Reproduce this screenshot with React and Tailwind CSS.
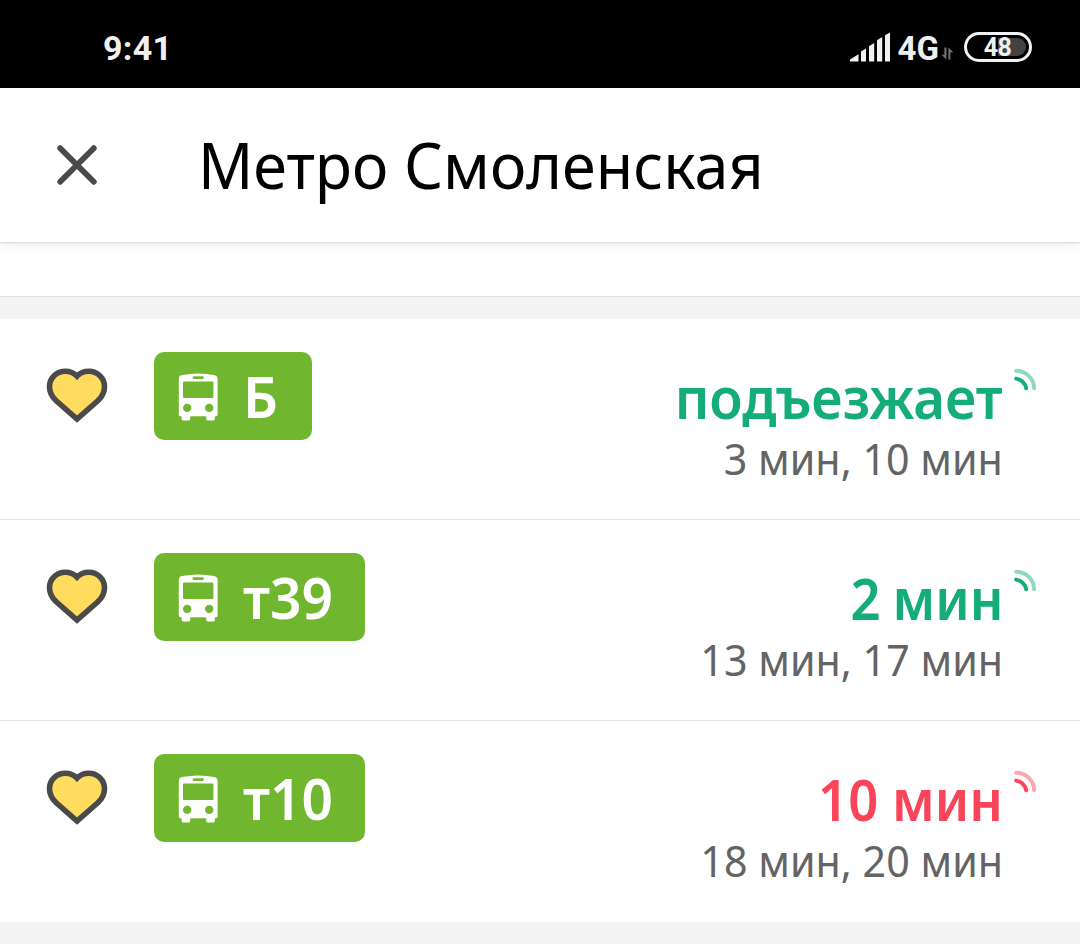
const ROWS = [
  { route: "Б", badge: "w-[158px]", first: "подъезжает", fit: "scale-x-[.96]", next: "3 мин, 10 мин", tone: "text-[#14ad78]" },
  { route: "т39", badge: "w-[211px]", first: "2 мин", fit: "scale-x-[.925] [word-spacing:-2px]", next: "13 мин, 17 мин", tone: "text-[#14ad78]" },
  { route: "т10", badge: "w-[211px]", first: "10 мин", fit: "scale-x-[.925]", next: "18 мин, 20 мин", tone: "text-[#fa4459]" },
];

function Signal() {
  return (
    <svg className="-mt-[1px] h-[30px] w-[42px]" viewBox="0 0 42 30" fill="#f2f2f2">
      <path d="M0 29.5V27.5L8.5 22.3V29.5Z" />
      <path d="M11 29.5V19.5L16 16.6V29.5Z" />
      <path d="M19 29.5V14.2L24.2 11V29.5Z" />
      <path d="M27 29.5V8.3L32.2 5V29.5Z" />
      <path d="M35 29.5V3.2L40 .5V29.5Z" />
    </svg>
  );
}

function DataArrows() {
  return (
    <svg className="h-[13px] w-[13px]" viewBox="0 0 13 13" fill="#747474">
      <path d="M3.4 .5H5.4V12.5L.5 7.8H3.4Z" />
      <path d="M9.4 12.5H7.4V.5L12.3 5.2H9.4Z" />
    </svg>
  );
}

function Heart() {
  return (
    <svg className="h-[56px] w-[62px]" viewBox="0 0 62 56">
      <path
        d="M31 8.2C27.5 4.5 23.5 3.3 19.3 3.3C10.5 3.3 3.5 10 3.5 18.7C3.5 24.5 6 28.8 10.2 32.8L31 51L51.8 32.8C56 28.8 58.5 24.5 58.5 18.7C58.5 10 51.5 3.3 42.7 3.3C38.5 3.3 34.5 4.5 31 8.2Z"
        fill="#ffdb5e"
        stroke="#4a4a4a"
        strokeWidth="5.6"
      />
    </svg>
  );
}

function Bus() {
  return (
    <svg className="mt-[2px] h-[48px] w-[40px]" viewBox="0 0 40 48">
      <path
        fillRule="evenodd"
        fill="#fff"
        d="M4 2Q20 -1 36 2Q39.6 2.6 39.6 6V41.5Q39.6 43.2 38 43.2H36.8V46Q36.8 47.4 35.4 47.4H29.6Q28.2 47.4 28.2 46V43.2H12.2V46Q12.2 47.4 10.8 47.4H5Q3.6 47.4 3.6 46V43.2H2.4Q.8 43.2 .8 41.5V6Q.8 2.6 4 2ZM15.8 3.3A1.3 1.3 0 0 0 15.8 5.9H24.6A1.3 1.3 0 0 0 24.6 3.3ZM6 8.6Q5 8.6 5 9.6V24Q5 25 6 25H34.4Q35.4 25 35.4 24V9.6Q35.4 8.6 34.4 8.6ZM9.2 30.7A4.2 4.2 0 1 0 9.2 39.1A4.2 4.2 0 1 0 9.2 30.7ZM31.2 30.7A4.2 4.2 0 1 0 31.2 39.1A4.2 4.2 0 1 0 31.2 30.7Z"
      />
    </svg>
  );
}

function Live() {
  return (
    <svg className="mt-[49px] ml-[10px] h-[24px] w-[24px]" viewBox="0 0 24 24" fill="none" stroke="currentColor" strokeWidth="4" strokeLinecap="round">
      <path d="M3.2 10.6Q11.2 12 13.2 20.2" />
      <path d="M3.2 2.8C13 2.8 21 10.7 21.1 20.2" opacity=".48" />
    </svg>
  );
}

function Row({ row }) {
  return (
    <li className="flex h-[201px] items-start border-b border-[#e3e3e3] last:border-b-0">
      <button className="mt-[49px] ml-[46px] block">
        <Heart />
      </button>
      <div className={`mt-[33px] ml-[46px] flex h-[88px] items-center rounded-[10px] bg-[#70b72f] pl-[24px] text-white ${row.badge}`}>
        <Bus />
        <span className="ml-[25px] origin-left scale-x-[.967] text-[57px] leading-[86px] font-semibold">{row.route}</span>
      </div>
      <div className="ml-auto flex flex-col items-end pt-[39px] whitespace-nowrap">
        <span className={`origin-right text-[57px] leading-[78px] font-semibold ${row.tone} ${row.fit}`}>{row.first}</span>
        <span className="-mt-[6px] origin-right scale-x-[.937] text-[44px] leading-[56px] text-[#646464]">{row.next}</span>
      </div>
      <div className={`w-[77px] ${row.tone}`}>
        <Live />
      </div>
    </li>
  );
}

export default function App() {
  return (
    <main className="flex h-[946px] w-[1080px] flex-col overflow-hidden bg-white font-['Noto_Sans',sans-serif]">
      <div className="flex h-[88px] shrink-0 items-center bg-black pt-[6px] pr-[48px] pl-[103px] font-['Roboto',sans-serif] font-bold text-[#f0f0f0]">
        <span className="mt-[2px] text-[34px] leading-[40px] tracking-[0.3px]">9:41</span>
        <div className="ml-auto flex items-center">
          <Signal />
          <span className="mt-[3px] ml-[6px] text-[33px] leading-[40px]">4G</span>
          <div className="ml-[2px] pt-[13px]">
            <DataArrows />
          </div>
          <div className="ml-[10px] flex h-[30px] w-[68px] rounded-full border-[3px] border-[#f2f2f2] p-[3px]">
            <div className="h-full w-full rounded-full bg-[linear-gradient(to_right,#000_50%,#424242_50%)] text-center text-[25px] leading-[19px]">
              <span className="mr-[1px] tracking-[-0.5px]">48</span>
            </div>
          </div>
        </div>
      </div>
      <header className="z-10 flex h-[154px] shrink-0 items-center bg-white shadow-[0_1px_2px_rgba(0,0,0,0.12),0_3px_12px_rgba(0,0,0,0.07)]">
        <button className="ml-[57px] block">
          <svg className="h-[40px] w-[40px]" viewBox="0 0 40 40" stroke="#4a4a4a" strokeWidth="5.8" strokeLinecap="round">
            <path d="M3.2 3.2L36.8 36.8M36.8 3.2L3.2 36.8" />
          </svg>
        </button>
        <h1 className="ml-[101px] origin-left scale-x-[.969] text-[63px] leading-[86px] font-normal whitespace-nowrap text-black">Метро Смоленская</h1>
      </header>
      <div className="h-[54px] shrink-0 bg-white" />
      <div className="h-[23px] shrink-0 border-t border-[#e0e0e0] bg-[#f4f4f4]" />
      <ul className="shrink-0">
        {ROWS.map((row) => (
          <Row key={row.route} row={row} />
        ))}
      </ul>
      <div className="h-[22px] shrink-0 bg-[#f4f4f4]" />
    </main>
  );
}
